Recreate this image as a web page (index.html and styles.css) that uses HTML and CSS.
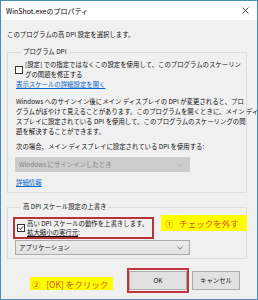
FILE: index.html
```html
<!DOCTYPE html>
<html lang="ja">
<head>
    <meta charset="UTF-8">
    <meta name="viewport" content="width=device-width, initial-scale=1.0">
    <title>WinShot.exeのプロパティ</title>
    <link rel="stylesheet" href="styles.css">
</head>
<body>
<div class="window">
    <div class="titlebar">
        <span class="title">WinShot.exeのプロパティ</span>
        <svg class="close" width="7" height="7" viewBox="0 0 7 7">
            <path d="M0.5 0.5 L6.5 6.5 M6.5 0.5 L0.5 6.5" stroke="#222" stroke-width="0.8" fill="none"/>
        </svg>
    </div>
    <div class="content">
        <p class="intro">このプログラムの高 DPI 設定を選択します。</p>

        <fieldset class="group group-dpi">
            <legend>プログラム DPI</legend>
            <div class="check-row">
                <span class="checkbox"></span>
                <span class="check-text">[設定] での指定ではなくこの設定を使用して、このプログラムのスケーリン<br>グの問題を修正する</span>
            </div>
            <a class="link" href="#">表示スケールの詳細設定を開く</a>
            <p class="note">Windows へのサインイン後にメイン ディスプレイの DPI が変更されると、プロ<br>グラムがぼやけて見えることがあります。このプログラムを開くときに、メイン ディ<br>スプレイに設定されている DPI を使用して、このプログラムのスケーリングの問<br>題を解決することができます。</p>
            <p class="when">次の場合、メイン ディスプレイに設定されている DPI を使用する:</p>
            <div class="select disabled">
                <span>Windows にサインインしたとき</span>
                <svg width="6" height="4" viewBox="0 0 6 4"><path d="M0.5 0.8 L3 3.2 L5.5 0.8" stroke="#a8a8a8" stroke-width="0.8" fill="none"/></svg>
            </div>
            <a class="link link-more" href="#">詳細情報</a>
        </fieldset>

        <fieldset class="group group-override">
            <legend>高 DPI スケール設定の上書き</legend>
            <div class="check-row marked">
                <span class="checkbox checked">
                    <svg width="6" height="6" viewBox="0 0 6 6"><path d="M0.8 3.1 L2.3 4.6 L5.2 1.2" stroke="#222" stroke-width="0.9" fill="none"/></svg>
                </span>
                <span class="check-text">高い DPI スケールの動作を上書きします。<br><u>拡大縮小の実行元</u>:</span>
            </div>
            <div class="select">
                <span>アプリケーション</span>
                <svg width="6" height="4" viewBox="0 0 6 4"><path d="M0.5 0.8 L3 3.2 L5.5 0.8" stroke="#555" stroke-width="0.8" fill="none"/></svg>
            </div>
        </fieldset>

        <div class="buttons">
            <div class="marked-btn"><button class="btn btn-ok">OK</button></div>
            <button class="btn btn-cancel">キャンセル</button>
        </div>
    </div>

    <div class="hint hint-check">①&nbsp;&nbsp;&nbsp;チェックを外す</div>
    <div class="hint hint-ok">②&nbsp;&nbsp;&nbsp;[OK] をクリック</div>
</div>
</body>
</html>
```

FILE: styles.css
```css
body {
    margin: 0;
    font-family: "Noto Sans CJK JP", "Noto Sans", sans-serif;
    font-size: 6.4px;
    color: #111;
}
.window {
    position: relative;
    width: 258px;
    height: 300px;
    box-sizing: border-box;
    border: 1px solid #4b8db4;
    background-color: #f0f0f0;
}
.titlebar {
    height: 19px;
    display: flex;
    align-items: center;
    justify-content: space-between;
    padding: 0 8px 0 5px;
    background-color: #fff;
}
.title {
    font-size: 7px;
    color: #000;
}
.content {
    padding: 0 10px 0 6px;
    line-height: 10px;
    white-space: nowrap;
}
.content p {
    margin: 0;
}
.intro {
    padding-top: 10px;
}
.group {
    margin: 0;
    padding: 0 8px;
    border: 1px solid #dcdcdc;
    min-width: 0;
}
.group legend {
    margin-left: 5px;
    padding: 0 2px;
    line-height: 10px;
}
.group-dpi {
    margin-top: 7px;
    padding-top: 3px;
    padding-bottom: 4px;
}
.group-override {
    margin-top: 9px;
    padding-top: 5px;
    padding-bottom: 3px;
}
.check-row {
    display: flex;
    align-items: center;
    gap: 2px;
    margin-left: -1px;
}
.checkbox {
    width: 8px;
    height: 8px;
    box-sizing: border-box;
    border: 1px solid #333;
    background-color: #fff;
    display: flex;
    align-items: center;
    justify-content: center;
    flex-shrink: 0;
}
.link {
    display: block;
    color: #0066cc;
    text-decoration: underline;
    width: max-content;
}
.note {
    margin-top: 7px !important;
}
.when {
    margin-top: 5px !important;
}
.select {
    width: 175px;
    height: 15px;
    box-sizing: border-box;
    margin-left: -1px;
    margin-top: 5px;
    padding: 0 6px 0 3px;
    display: flex;
    align-items: center;
    justify-content: space-between;
    border: 1px solid #acacac;
    background: linear-gradient(#ececec, #e2e2e2);
    color: #111;
}
.select.disabled {
    border-color: #cccccc;
    background: #cccccc;
    color: #838383;
}
.link-more {
    margin-top: 6px;
}
.marked {
    margin-left: -3px;
    margin-top: 0;
    width: 141px;
    height: 22px;
    box-sizing: border-box;
    border: 2px solid #b8323a;
    padding-left: 2px;
    line-height: 9px;
}
.marked + .select {
    margin-top: 1px;
}
.buttons {
    display: flex;
    justify-content: flex-end;
    align-items: center;
    gap: 3px;
    margin-top: 9px;
    padding-right: 7px;
}
.marked-btn {
    border: 2px solid #c0343c;
    padding: 1px 0;
}
.btn {
    height: 19px;
    border: 1px solid #adadad;
    background-color: #e1e1e1;
    font-family: inherit;
    font-size: 6.4px;
    color: #111;
    padding: 0;
}
.btn-ok {
    width: 58px;
    display: block;
}
.btn-cancel {
    width: 48px;
}
.hint {
    position: absolute;
    background-color: #ffff00;
    color: #dc4a1a;
    font-size: 8.5px;
    white-space: nowrap;
    display: flex;
    align-items: center;
    box-sizing: border-box;
}
.hint-check {
    left: 160px;
    top: 214px;
    width: 86px;
    height: 16px;
    padding-left: 4px;
}
.hint-ok {
    left: 29px;
    top: 276px;
    width: 83px;
    height: 13px;
    padding-left: 2px;
}
```
